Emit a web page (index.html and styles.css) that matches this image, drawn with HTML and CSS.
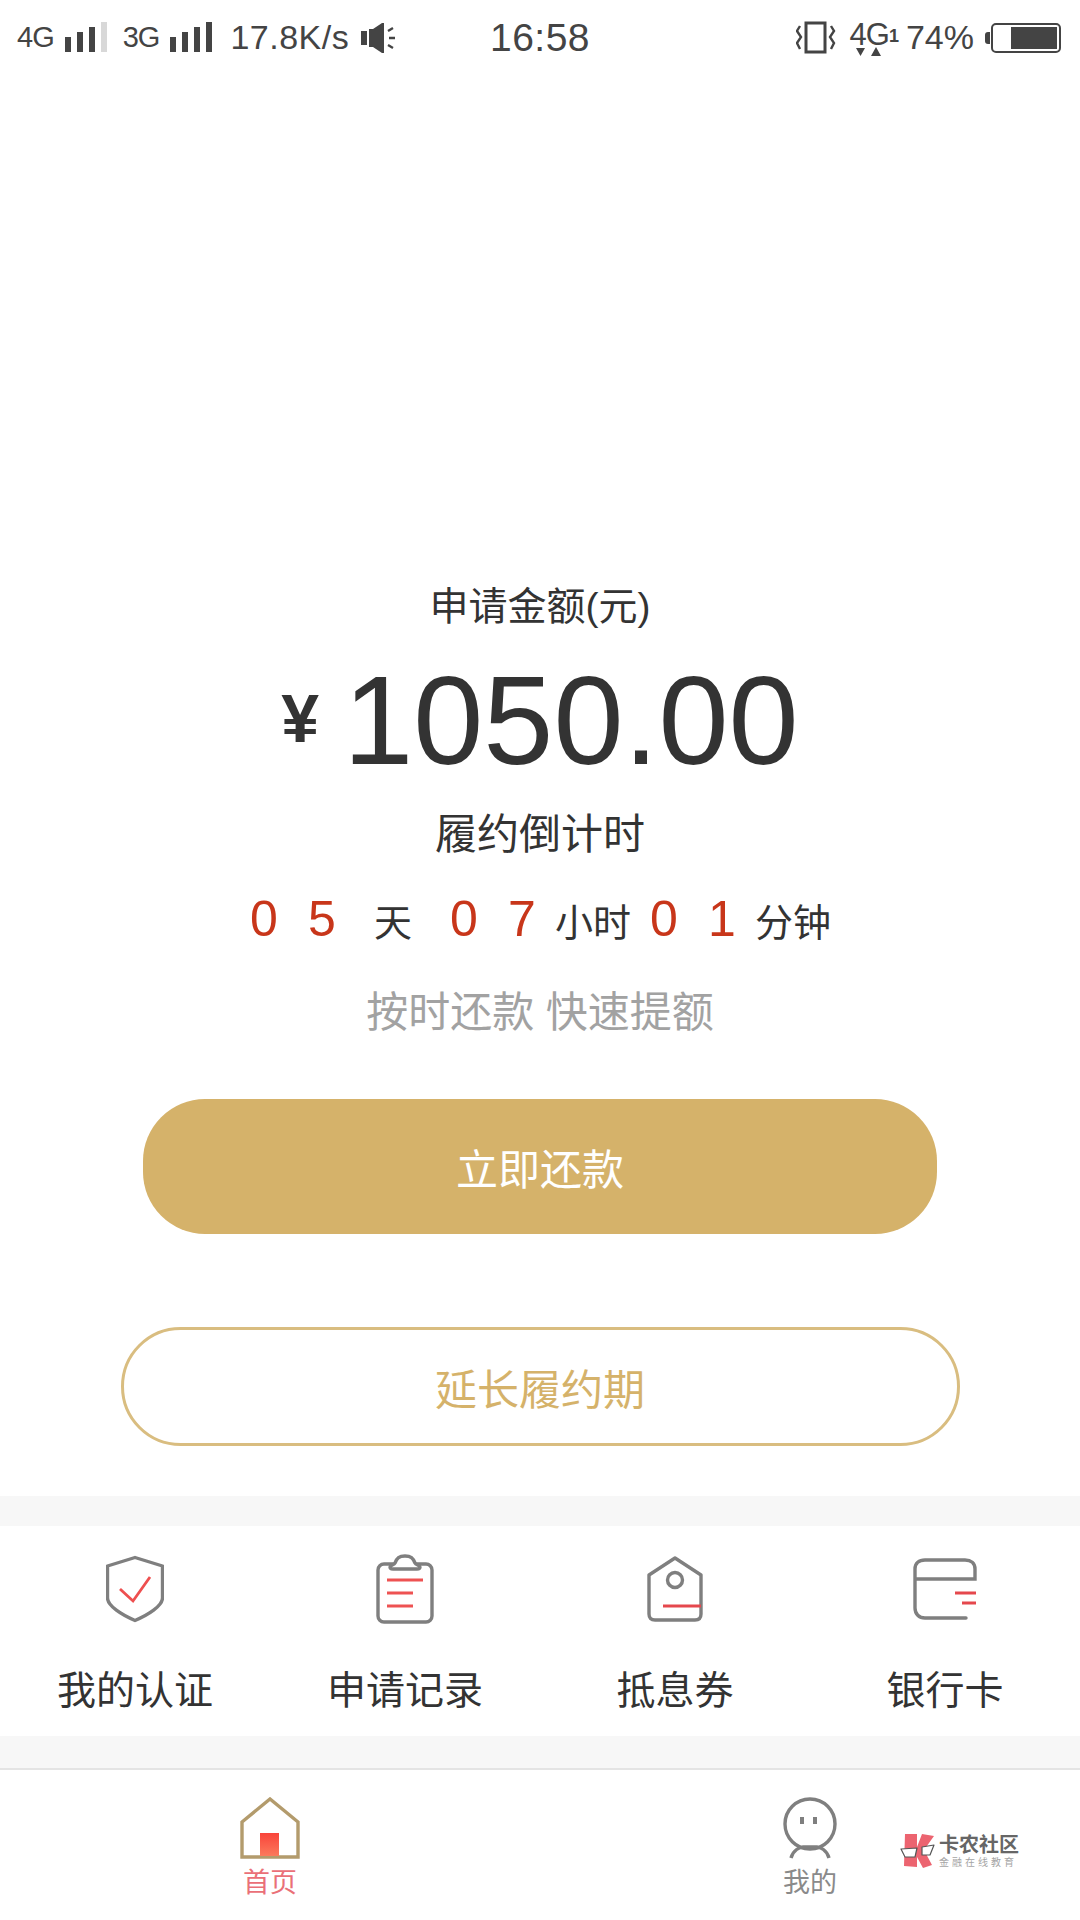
FILE: index.html
```html
<!DOCTYPE html>
<html lang="zh-CN">
<head>
  <meta charset="UTF-8">
  <title>首页</title>
  <link rel="stylesheet" href="styles.css">
</head>
<body>
  <div class="page">

    <!-- 状态栏 -->
    <div class="status-bar">
      <div class="status-left">
        <span class="net">4G</span>
        <svg class="sig" width="42" height="32" viewBox="0 0 42 32"><g fill="#444"><rect x="0" y="15" width="6" height="15"/><rect x="12" y="10" width="6" height="20"/><rect x="24" y="5" width="6" height="25"/><rect x="36" y="0" width="6" height="30" fill="#d8d8d8"/></g></svg>
        <span class="net net-3g">3G</span>
        <svg class="sig" width="42" height="32" viewBox="0 0 42 32"><g fill="#444"><rect x="0" y="15" width="6" height="15"/><rect x="12" y="10" width="6" height="20"/><rect x="24" y="5" width="6" height="25"/><rect x="36" y="0" width="6" height="30"/></g></svg>
        <span class="speed">17.8K/s</span>
        <svg class="mute" width="36" height="32" viewBox="0 0 36 32"><path d="M0 9h6v14H0zM8 7h4l9-6h2v30h-2l-9-6H8z" fill="#444"/><path d="M27 9l5-3M28 16h6M27 23l5 3" stroke="#444" stroke-width="2.400"/></svg>
      </div>
      <div class="status-time">16:58</div>
      <div class="status-right">
        <svg width="40" height="34" viewBox="0 0 40 34"><rect x="10" y="2" width="19" height="29" fill="none" stroke="#444" stroke-width="3"/><path d="M4 5L1 10l4 6-4 6 3 6M35 5l3 5-4 6 4 6-3 6" fill="none" stroke="#444" stroke-width="2.400"/></svg>
        <div class="net-lte">
          <span class="lte-text">4G</span>
          <svg width="26" height="10" viewBox="0 0 26 10"><path d="M0 1h9L4.500 9zM15 9h10L20 0z" fill="#444"/></svg>
        </div>
        <span class="sim">1</span>
        <span class="batt-num">74%</span>
        <div class="batt-wrap">
          <i class="batt-cap"></i>
          <div class="batt"><i class="batt-fill"></i></div>
        </div>
      </div>
    </div>

    <!-- 金额 -->
    <div class="hero">
      <div class="apply-label">申请金额(元)</div>
      <div class="amount"><span class="yen">¥</span><span class="money">1050.00</span></div>
      <div class="count-title">履约倒计时</div>
      <div class="countdown">
        <span class="digit">0</span><span class="digit">5</span><span class="unit">天</span>
        <span class="digit">0</span><span class="digit">7</span><span class="unit">小时</span>
        <span class="digit">0</span><span class="digit">1</span><span class="unit">分钟</span>
      </div>
      <div class="tip">按时还款 快速提额</div>
      <button class="btn-pay">立即还款</button>
      <button class="btn-extend">延长履约期</button>
    </div>

    <!-- 功能入口 -->
    <div class="menu">
      <div class="menu-item">
        <svg class="menu-icon" width="58" height="66" viewBox="0 0 58 66">
          <path d="M29 1.500L56.500 10V42C56.500 50 42 59 29 64.500C16 59 1.500 50 1.500 42V10Z" fill="none" stroke="#7f7f7f" stroke-width="3.400" stroke-linejoin="round"/>
          <path d="M14 33L27 45L44 21" fill="none" stroke="#ee4f4f" stroke-width="2.800"/>
        </svg>
        <span>我的认证</span>
      </div>
      <div class="menu-item">
        <svg class="menu-icon" width="58" height="70" viewBox="0 0 58 70">
          <rect x="2" y="10" width="54" height="58" rx="6" fill="none" stroke="#7f7f7f" stroke-width="3.400"/>
          <path d="M14 13C14 11 18 11 19 9C21 4 23 2 29 2C35 2 37 4 39 9C40 11 44 11 44 13C44 14 43 15 41 15H17C15 15 14 14 14 13Z" fill="#fff" stroke="#7f7f7f" stroke-width="3.400"/>
          <path d="M11 26H47M11 39H37M11 52H37" stroke="#ee5252" stroke-width="3"/>
        </svg>
        <span>申请记录</span>
      </div>
      <div class="menu-item">
        <svg class="menu-icon" width="56" height="66" viewBox="0 0 56 66">
          <path d="M28 2L54 19V58C54 62 52 64 48 64H8C4 64 2 62 2 58V19Z" fill="none" stroke="#7f7f7f" stroke-width="3.400" stroke-linejoin="round"/>
          <circle cx="28" cy="24" r="7.500" fill="none" stroke="#7f7f7f" stroke-width="3.400"/>
          <path d="M16 50H54" stroke="#e5484d" stroke-width="3"/>
        </svg>
        <span>抵息券</span>
      </div>
      <div class="menu-item">
        <svg class="menu-icon" width="64" height="62" viewBox="0 0 64 62">
          <path d="M53 60H12C6 60 2 56 2 50V11C2 5 6 2 12 2H52C58 2 62 5 62 11V21H2" fill="none" stroke="#7f7f7f" stroke-width="3.400" stroke-linecap="round"/>
          <path d="M42 35H63M49 45H63" stroke="#e5484d" stroke-width="3"/>
        </svg>
        <span>银行卡</span>
      </div>
    </div>

    <!-- 底部导航 -->
    <div class="tabbar">
      <div class="tab tab-active">
        <svg width="60" height="62" viewBox="0 0 60 62">
          <defs><linearGradient id="door" x1="0" y1="0" x2="0" y2="1"><stop offset="0" stop-color="#f9443a"/><stop offset="1" stop-color="#fb7a5c"/></linearGradient></defs>
          <path d="M2 60V25L30 2L58 25V60Z" fill="none" stroke="#b39b6c" stroke-width="3.400"/>
          <rect x="20" y="36" width="19" height="23" fill="url(#door)"/>
        </svg>
        <span>首页</span>
      </div>
      <div class="tab">
        <svg width="56" height="62" viewBox="0 0 56 62">
          <circle cx="28" cy="27" r="25" fill="none" stroke="#7f7f7f" stroke-width="3.400"/>
          <path d="M20 20V27M33 20V27" stroke="#7f7f7f" stroke-width="4"/>
          <path d="M9 61C11 53 18 50 21 50H35C38 50 45 53 47 61" fill="none" stroke="#7f7f7f" stroke-width="3.400"/>
        </svg>
        <span>我的</span>
      </div>

      <!-- 水印 -->
      <div class="watermark">
        <svg width="36" height="36" viewBox="0 0 36 36">
          <path d="M5 1H17V14L22 1L34 3L24 17L32 32L23 35L17 24V34L4 33Z" fill="#ec6470"/>
          <path d="M1 16L17 15L15 24H5ZM22 14L34 12L30 22H22Z" fill="#fff" stroke="#555" stroke-width="1.200" stroke-linejoin="round"/>
        </svg>
        <div class="mark-text">
          <strong>卡农社区</strong>
          <small>金融在线教育</small>
        </div>
      </div>
    </div>

  </div>
</body>
</html>
```

FILE: styles.css
```css
* {
  box-sizing: border-box;
}
body {
  margin: 0;
  background: #fff;
  font-family: "Liberation Sans", "Noto Sans CJK SC", sans-serif;
  color: #333;
}
.page {
  width: 1080px;
  height: 1920px;
  display: flex;
  flex-direction: column;
  overflow: hidden;
}

/* 状态栏 */
.status-bar {
  height: 72px;
  padding: 3px 19px 0 17px;
  display: grid;
  grid-template-columns: 1fr auto 1fr;
  align-items: center;
  color: #444;
}
.status-left {
  display: flex;
  align-items: center;
}
.status-right {
  display: flex;
  align-items: center;
  justify-content: flex-end;
}
.net {
  font-size: 29px;
  letter-spacing: -1px;
  margin-right: 11px;
}
.net-3g {
  margin-left: 16px;
}
.speed {
  font-size: 34px;
  margin-left: 18px;
  margin-right: 12px;
  letter-spacing: 0.500px;
}
.status-time {
  font-size: 39px;
  letter-spacing: 0.500px;
  margin-left: 2px;
}
.net-lte {
  display: flex;
  flex-direction: column;
  align-items: center;
  margin-left: 14px;
  line-height: 1;
}
.lte-text {
  font-size: 31px;
  letter-spacing: -1px;
  margin-bottom: -3px;
}
.sim {
  font-size: 18px;
  font-weight: bold;
  margin-right: 7px;
  margin-bottom: 2px;
}
.batt-num {
  font-size: 34px;
  margin-right: 11px;
}
.batt-wrap {
  display: flex;
  align-items: center;
}
.batt-cap {
  width: 5px;
  height: 12px;
  background: #444;
  border-radius: 3px 0 0 3px;
  margin-right: 1px;
}
.batt {
  width: 70px;
  height: 30px;
  border: 2px solid #444;
  border-radius: 5px;
  padding: 2px;
  display: flex;
  justify-content: flex-end;
}
.batt-fill {
  width: 46px;
  background: #444;
}

/* 金额区 */
.hero {
  flex: 1;
  display: flex;
  flex-direction: column;
  align-items: center;
  padding-top: 511px;
}
.apply-label {
  font-size: 39px;
  line-height: 48px;
}
.amount {
  display: flex;
  align-items: center;
  height: 130px;
  margin-top: 25px;
  margin-left: 0;
}
.yen {
  font-size: 68px;
  font-weight: bold;
  margin-right: 24px;
  margin-top: -6px;
}
.money {
  font-size: 126px;
  line-height: 130px;
}
.count-title {
  font-size: 42px;
  line-height: 48px;
  margin-top: 25px;
}
.countdown {
  display: flex;
  align-items: center;
  height: 50px;
  margin-top: 35px;
  margin-right: 10px;
}
.digit {
  width: 58px;
  text-align: center;
  font-size: 50px;
  color: #c8361a;
}
.unit {
  width: 84px;
  text-align: center;
  font-size: 38px;
}
.tip {
  font-size: 42px;
  line-height: 50px;
  margin-top: 44px;
  color: #a2a2a2;
}
.btn-pay,
.btn-extend {
  font-family: inherit;
  font-size: 42px;
  display: block;
}
.btn-pay {
  width: 794px;
  height: 135px;
  margin-top: 61px;
  border: none;
  border-radius: 62px;
  background: #d5b26a;
  color: #fff;
}
.btn-extend {
  width: 839px;
  height: 119px;
  margin-top: 93px;
  border: 3px solid #d9bd80;
  border-radius: 60px;
  background: #fff;
  color: #d5b26a;
}

/* 功能入口 */
.menu {
  height: 272px;
  display: grid;
  grid-template-columns: repeat(4, 270px);
  background: #fff;
  border-top: 30px solid #f7f7f7;
  border-bottom: 32px solid #f7f7f7;
}
.menu-item {
  display: flex;
  flex-direction: column;
  align-items: center;
  font-size: 39px;
  height: 210px;
}
.menu-icon {
  height: 70px;
  margin-top: 28px;
  margin-bottom: 43px;
}
.menu-item span {
  line-height: 48px;
}

/* 底部导航 */
.tabbar {
  height: 152px;
  position: relative;
  display: grid;
  grid-template-columns: 1fr 1fr;
  border-top: 2px solid #e4e4e4;
}
.tab {
  display: flex;
  flex-direction: column;
  align-items: center;
  padding-top: 27px;
  font-size: 27px;
  line-height: 36px;
  color: #8a8a8a;
}
.tab svg {
  display: block;
  margin-bottom: 6px;
}
.tab-active {
  color: #ea7078;
}
.watermark {
  position: absolute;
  left: 900px;
  top: 63px;
  display: flex;
  align-items: center;
  gap: 3px;
}
.mark-text {
  display: flex;
  flex-direction: column;
  line-height: 1;
}
.mark-text strong {
  font-size: 20px;
  color: #666;
}
.mark-text small {
  font-size: 10px;
  letter-spacing: 3px;
  color: #a5a5a5;
  margin-top: 3px;
}
```
